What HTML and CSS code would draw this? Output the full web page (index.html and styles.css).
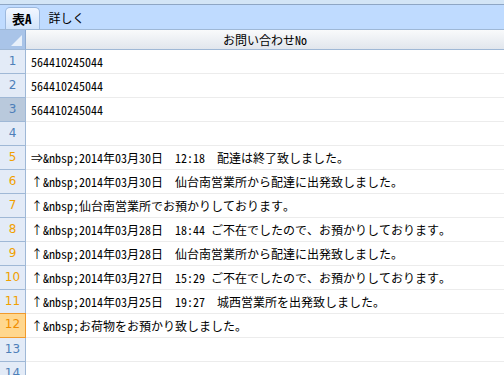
FILE: index.html
```html
<!DOCTYPE html>
<html lang="ja">
<head>
    <meta charset="UTF-8">
    <title>表A</title>
    <link rel="stylesheet" href="styles.css">
</head>
<body>
    <div class="topline"></div>

    <!-- タブ -->
    <div class="tabbar">
        <div class="tab active">表A</div>
        <div class="tab">詳しく</div>
    </div>

    <!-- 表 -->
    <div class="sheet">
        <div class="corner"></div>
        <div class="colhead">お問い合わせNo</div>

        <div class="rowhead">1</div><div class="cell">564410245044</div>
        <div class="rowhead">2</div><div class="cell">564410245044</div>
        <div class="rowhead selected">3</div><div class="cell">564410245044</div>
        <div class="rowhead">4</div><div class="cell"></div>
        <div class="rowhead warn">5</div><div class="cell">⇒&amp;nbsp;2014年03月30日　12:18　配達は終了致しました。</div>
        <div class="rowhead warn">6</div><div class="cell">↑&amp;nbsp;2014年03月30日　仙台南営業所から配達に出発致しました。</div>
        <div class="rowhead warn">7</div><div class="cell">↑&amp;nbsp;仙台南営業所でお預かりしております。</div>
        <div class="rowhead warn">8</div><div class="cell">↑&amp;nbsp;2014年03月28日　18:44 ご不在でしたので、お預かりしております。</div>
        <div class="rowhead warn">9</div><div class="cell">↑&amp;nbsp;2014年03月28日　仙台南営業所から配達に出発致しました。</div>
        <div class="rowhead warn">10</div><div class="cell">↑&amp;nbsp;2014年03月27日　15:29 ご不在でしたので、お預かりしております。</div>
        <div class="rowhead warn">11</div><div class="cell">↑&amp;nbsp;2014年03月25日　19:27　城西営業所を出発致しました。</div>
        <div class="rowhead current">12</div><div class="cell">↑&amp;nbsp;お荷物をお預かり致しました。</div>
        <div class="rowhead">13</div><div class="cell"></div>
        <div class="rowhead">14</div><div class="cell"></div>
    </div>
</body>
</html>
```

FILE: styles.css
```css
body {
    margin: 0;
    width: 504px;
    height: 375px;
    overflow: hidden;
    background: #ffffff;
    font-family: "Noto Sans Mono CJK JP", "Noto Sans CJK JP", "DejaVu Sans Mono", monospace;
    font-size: 12px;
    color: #000;
}
.topline {
    height: 4px;
    background: #d3e5f6;
    border-bottom: 1px solid #8ea6c4;
}
.tabbar {
    height: 24px;
    background: #bfdbff;
    display: flex;
    align-items: flex-end;
    padding-left: 5px;
    gap: 3px;
    border-bottom: 1px solid #9fb8d6;
}
.tab {
    height: 21px;
    line-height: 20px;
    padding: 0 6px;
}
.tab.active {
    font-weight: bold;
    font-size: 13px;
    background: linear-gradient(#f2f7ff, #d2e4fb);
    border: 1px solid #9db9de;
    border-bottom: none;
    border-radius: 5px 5px 0 0;
    height: 21px;
    line-height: 22px;
    padding: 0 7px 0 6px;
}
.sheet {
    display: grid;
    grid-template-columns: 26px 1fr;
    grid-template-rows: 20px;
    grid-auto-rows: 24px;
}
.corner {
    background: #a9c4e8;
    border-right: 1px solid #8eabd2;
    border-bottom: 1px solid #9fb8d6;
    position: relative;
}
.corner::after {
    content: "";
    position: absolute;
    right: 3px;
    bottom: 3px;
    border-left: 11px solid transparent;
    border-bottom: 11px solid #e8f0fa;
}
.colhead {
    line-height: 19px;
    text-align: center;
    background: linear-gradient(#f9fafb, #e1e6ed);
    border-bottom: 1px solid #9fb8d6;
}
.rowhead {
    background: #e3ebf7;
    border-right: 1px solid #9fb8d6;
    border-bottom: 1px solid #9fb8d6;
    color: #4e7fb9;
    text-align: center;
    line-height: 23px;
    font-family: "DejaVu Sans", sans-serif;
    font-size: 12px;
}
.rowhead.warn {
    color: #f0a000;
}
.rowhead.selected {
    background: #b9c9dc;
}
.rowhead.current {
    background: #ffd78e;
    color: #f08c00;
    border: 1px solid #f19a2c;
    border-left: none;
    line-height: 21px;
    margin-top: -1px;
    height: 23px;
}
.cell {
    border-bottom: 1px solid #ececec;
    line-height: 23px;
    padding-left: 5px;
    white-space: nowrap;
    overflow: hidden;
}
```
